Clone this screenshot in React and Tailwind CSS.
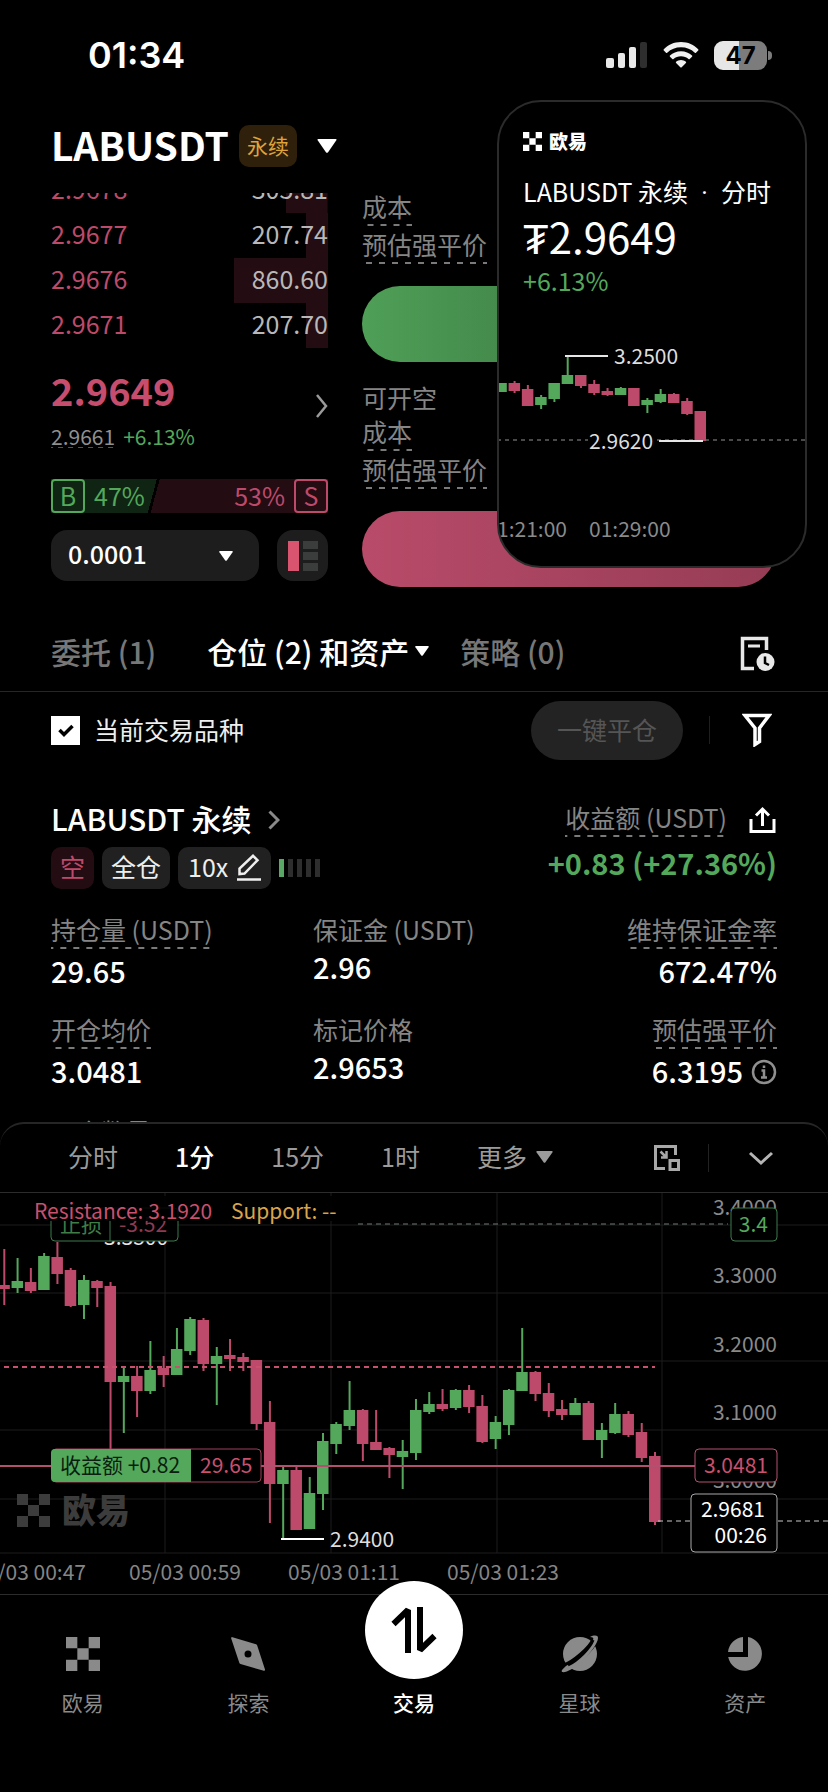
import React, { useState } from 'react';
import clsx from 'clsx';

const asks = [
  { price: '2.9677', size: '207.74', depth: '8%' },
  { price: '2.9676', size: '860.60', depth: '34%' },
  { price: '2.9671', size: '207.70', depth: '8%' },
];

// [up, high, bodyTop, bodyBottom, low]
const candles = [
  [0, 56, 92, 96, 112], [1, 65, 88, 95, 100], [0, 75, 89, 98, 100], [1, 60, 63, 97, 97], [0, 49, 64, 81, 91],
  [0, 75, 77, 113, 114], [1, 82, 87, 112, 126], [0, 87, 88, 95, 114], [0, 89, 93, 189, 257], [1, 173, 183, 189, 240],
  [0, 173, 183, 198, 224], [1, 148, 177, 198, 201], [0, 163, 175, 182, 194], [1, 135, 156, 182, 182], [1, 124, 126, 158, 162],
  [0, 125, 127, 171, 178], [1, 154, 163, 171, 212], [0, 146, 162, 166, 178], [0, 160, 164, 169, 178], [0, 167, 167, 231, 237],
  [0, 208, 229, 291, 330], [1, 274, 277, 291, 346], [0, 273, 277, 337, 337], [1, 284, 300, 336, 336], [1, 240, 248, 301, 317],
  [1, 229, 231, 251, 261], [1, 188, 217, 233, 237], [0, 216, 217, 251, 268], [0, 217, 249, 257, 257], [0, 254, 255, 262, 285],
  [1, 247, 258, 264, 296], [1, 206, 217, 260, 267], [1, 199, 211, 219, 221], [0, 196, 211, 216, 218], [1, 196, 197, 215, 217],
  [0, 192, 197, 214, 220], [0, 202, 213, 249, 250], [1, 223, 229, 246, 256], [1, 196, 197, 232, 242], [1, 135, 179, 198, 198],
  [0, 178, 179, 201, 208], [0, 190, 200, 218, 224], [0, 207, 216, 222, 227], [1, 205, 210, 222, 222], [0, 208, 210, 247, 247],
  [1, 230, 237, 247, 265], [1, 210, 221, 240, 241], [0, 218, 221, 242, 244], [0, 230, 239, 265, 269], [0, 259, 263, 329, 332],
];

const miniCandles = [
  [1, 43, 43, 52, 52], [0, 41, 43, 51, 53], [0, 45, 49, 66, 66], [1, 55, 57, 65, 69], [1, 43, 43, 59, 62], [1, 16, 35, 44, 44],
  [0, 35, 35, 46, 48], [0, 40, 44, 53, 55], [0, 48, 51, 55, 56], [1, 47, 48, 55, 55], [0, 48, 48, 66, 66], [1, 58, 60, 65, 73],
  [1, 49, 54, 62, 63], [0, 53, 54, 63, 63], [0, 58, 61, 74, 75], [0, 71, 71, 101, 101],
];

function Candles({ data }) {
  return data.map(([up, high, top, bottom, low], i) => {
    const x = 4.3 + i * 13.28;
    return (
      <g key={i} className={up ? 'fill-[#54a85b]' : 'fill-[#be4a6b]'}>
        <rect x={x - 1} y={high} width={2} height={low - high} />
        <rect x={x - 6} y={top} width={11.5} height={bottom - top} />
      </g>
    );
  });
}

function DashedLabel({ children, className }) {
  return (
    <span
      className={clsx(
        'inline-block w-fit h-[33px] text-[25px] leading-[27px] text-[#858585] bg-[linear-gradient(to_right,#7a7a7a_50%,transparent_50%)] bg-[length:13px_2px] bg-repeat-x bg-bottom',
        className
      )}
    >
      {children}
    </span>
  );
}

function OkxMark({ className }) {
  return (
    <svg viewBox="0 0 33 33" className={className} fill="currentColor">
      <path d="M0 0h11v11H0zM22 0h11v11H22zM11 11h11v11H11zM0 22h11v11H0zM22 22h11v11H22z" />
    </svg>
  );
}

function Triangle({ className }) {
  return (
    <svg viewBox="0 0 18 13" className={className} fill="currentColor">
      <path d="M1 0h16q1.500 0 .5 1.500L10 12.200q-1 1.200-2 0L.5 1.500Q-.5 0 1 0z" />
    </svg>
  );
}

function StatusBar() {
  return (
    <div className="h-[98px] pl-[88px] pr-14 pt-3 flex items-center justify-between">
      <span className="font-['Inter'] font-semibold text-[36px] leading-10">01:34</span>
      <div className="flex items-center gap-[15px]">
        <svg width="42" height="28" viewBox="0 0 42 28" fill="#e8e8e8">
          <rect x="0" y="17" width="8" height="10" rx="2" />
          <rect x="12" y="12" width="7" height="15" rx="2" />
          <rect x="23" y="6" width="7" height="21" rx="2" />
          <rect x="34" y="1" width="7" height="26" rx="2" fill="#2e2e2e" />
        </svg>
        <svg width="36" height="28" viewBox="0 0 36 28" fill="#f0f0f0">
          <path d="M18 1C11 1 5 3.800.800 8.200q-.6.700 0 1.300l2.200 2.200q.6.500 1.200 0C7.900 8.200 12.600 6.300 18 6.300s10.100 1.900 13.800 5.400q.6.500 1.200 0l2.200-2.200q.6-.6 0-1.300C31 3.800 25 1 18 1z" />
          <path d="M18 10.200c-4.300 0-8.200 1.600-11 4.300q-.7.600 0 1.300l2.300 2.200q.6.500 1.200 0c2-1.700 4.600-2.700 7.500-2.700s5.500 1 7.500 2.700q.6.500 1.200 0l2.300-2.200q.7-.7 0-1.300c-2.800-2.700-6.700-4.300-11-4.300z" />
          <path d="M18 19c-1.900 0-3.600.7-4.900 1.800q-.6.600 0 1.200l4.200 4.300q.7.600 1.400 0l4.200-4.300q.6-.6 0-1.200C21.600 19.700 19.900 19 18 19z" />
        </svg>
        <div className="flex items-center gap-px">
          <div className="w-[53px] h-[29px] rounded-[9px] bg-[linear-gradient(to_right,#e6e6e6_47%,#7c7c7c_47%)] text-black font-['Inter'] font-bold text-[24px] leading-[30px] text-center">
            47
          </div>
          <div className="w-1 h-[9px] rounded-r-full bg-[#7c7c7c]" />
        </div>
      </div>
    </div>
  );
}

function OrderBook() {
  return (
    <div className="w-[277px] shrink-0">
      <div className="h-5 overflow-hidden flex items-end">
        <div className="w-full h-[45px] pb-1 shrink-0 flex items-center justify-between text-[25px] bg-[linear-gradient(#240c13,#240c13)] bg-[length:15%_100%] bg-no-repeat bg-right">
          <span className="text-[#be4a6b]">2.9678</span>
          <span className="text-[#b8b8b8]">305.81</span>
        </div>
      </div>
      {asks.map((row) => (
        <div key={row.price} className="relative h-[45px] pb-1 flex items-center justify-between text-[25px]">
          <div className="absolute inset-y-0 right-0 bg-[#240c13]" style={{ width: row.depth }} />
          <span className="relative text-[#be4a6b]">{row.price}</span>
          <span className="relative text-[#b8b8b8]">{row.size}</span>
        </div>
      ))}

      <div className="mt-[22px] flex items-center justify-between">
        <div>
          <div className="text-[38px] leading-10 font-bold text-[#c64d6d]">2.9649</div>
          <div className="mt-[14px] flex gap-2 text-[21px] leading-6">
            <span className="text-[#909090] bg-[linear-gradient(to_right,#555_50%,transparent_50%)] bg-[length:10px_1px] bg-repeat-x bg-bottom">2.9661</span>
            <span className="text-[#54a85b]">+6.13%</span>
          </div>
        </div>
        <svg className="mb-[6px]" width="12" height="24" viewBox="0 0 12 24" fill="none" stroke="#9a9a9a" strokeWidth="2.500">
          <path d="M1 1l9 11-9 11" />
        </svg>
      </div>

      <div className="mt-[31px] h-[34px] flex items-center justify-between text-[25px] leading-[28px] bg-[linear-gradient(105deg,#0f2413_0,#0f2413_37%,#000_37%,#000_38%,#240c13_38%)]">
        <div className="flex items-center gap-[9px] text-[#54a85b]">
          <span className="size-[34px] border-2 border-[#54a85b] rounded-sm text-center">B</span>
          <span className="leading-[34px] pb-[3px]">47%</span>
        </div>
        <div className="flex items-center gap-[9px] text-[#be4a6b]">
          <span className="leading-[34px] pb-[3px]">53%</span>
          <span className="size-[34px] border-2 border-[#be4a6b] rounded-sm text-center">S</span>
        </div>
      </div>

      <div className="mt-[17px] flex gap-[18px]">
        <div className="relative flex-1 text-white">
          <select aria-label="精度" className="appearance-none w-full h-[51px] pl-[17px] pb-[3px] rounded-2xl bg-[#1d1d1d] text-[25px] font-medium">
            <option>0.0001</option>
          </select>
          <Triangle className="absolute right-[26px] top-[21px] w-[14px] h-[10px] pointer-events-none" />
        </div>
        <button aria-label="盘口样式" className="size-[51px] rounded-2xl bg-[#1d1d1d] flex items-center justify-center">
          <svg width="32" height="32" viewBox="0 0 32 32">
            <path fill="#d9546f" d="M1 1h11v30H1z" />
            <path fill="#3a3d3c" d="M16 1h15v8H16zM16 12h15v8H16zM16 23h15v8H16z" />
          </svg>
        </button>
      </div>
    </div>
  );
}

function OrderForm() {
  return (
    <div className="flex-1 flex flex-col items-start">
      <DashedLabel>成本</DashedLabel>
      <DashedLabel className="mt-[5px]">预估强平价</DashedLabel>
      <button aria-label="开多" className="mt-[22px] h-[76px] w-full rounded-full bg-linear-to-r from-[#4f9f57] to-[#2f6437]" />
      <span className="mt-5 text-[25px] leading-[30px] text-[#858585]">可开空</span>
      <DashedLabel className="mt-[6px]">成本</DashedLabel>
      <DashedLabel className="mt-[5px]">预估强平价</DashedLabel>
      <button aria-label="开空" className="mt-[22px] h-[76px] w-full rounded-full bg-linear-to-r from-[#b84b69] to-[#963c55]" />
    </div>
  );
}

function FloatingTicker() {
  return (
    <div className="absolute top-[100px] right-[21px] w-[310px] h-[468px] rounded-[44px] border-2 border-[#2b2b2b] bg-black overflow-hidden">
      <div className="px-6 pt-[27px]">
        <div className="flex items-center gap-[7px] h-6">
          <OkxMark className="size-[19px]" />
          <span className="text-[19px] leading-6 font-black">欧易</span>
        </div>
        <div className="mt-5 text-[25px] leading-[36px] whitespace-nowrap">
          LABUSDT 永续<span className="mx-[7px] font-['Roboto']"> · </span>分时
        </div>
        <div className="text-[42px] leading-[48px]">₮2.9649</div>
        <div className="mt-[2px] text-[25px] leading-[36px] text-[#54a85b]">+6.13%</div>
      </div>
      <svg viewBox="0 0 310 210" className="absolute left-[-2px] top-[238px] w-[310px]">
        <path d="M0 100h310" stroke="#4a4a4a" strokeWidth="2" strokeDasharray="4 4" />
        <Candles data={miniCandles} />
        <path d="M68 16h43M162 101h44" stroke="#e6e6e6" strokeWidth="2" />
        <text x="117" y="24" className="text-[21px] fill-[#dedede]">3.2500</text>
        <rect x="91" y="92" width="66" height="18" />
        <text x="92" y="109" className="text-[21px] fill-[#dedede]">2.9620</text>
        <text x="70" y="197" textAnchor="end" className="text-[21px] fill-[#8a8a8a]">01:21:00</text>
        <text x="92" y="197" className="text-[21px] fill-[#8a8a8a]">01:29:00</text>
      </svg>
    </div>
  );
}

function Metric({ label, value, dashed, right, info }) {
  return (
    <div className={clsx('flex flex-col gap-[2px]', right && 'items-end')}>
      {dashed ? <DashedLabel>{label}</DashedLabel> : <span className="h-[29px] text-[25px] leading-[27px] text-[#858585]">{label}</span>}
      <span className="h-[38px] flex items-center gap-2 text-[29px] leading-9 font-medium">
        {value}
        {info && (
          <svg className="mt-1" width="26" height="26" viewBox="0 0 26 26" fill="none" stroke="#8f8f8f" strokeWidth="2.500">
            <circle cx="13" cy="13" r="11" />
            <path d="M10.500 11.500H13V18M10 18.500h6M13 6.500v2.500" />
          </svg>
        )}
      </span>
    </div>
  );
}

function Position() {
  return (
    <section className="mt-8 px-[51px]">
      <div className="flex justify-between">
        <div>
          <a href="#position" className="flex items-center gap-4 h-9 text-[30px] font-medium">
            LABUSDT 永续
            <svg className="mt-1" width="12" height="20" viewBox="0 0 12 20" fill="none" stroke="#8a8a8a" strokeWidth="3">
              <path d="M1.500 1.500L10 10l-8.500 8.500" />
            </svg>
          </a>
          <div className="mt-[11px] h-[42px] flex items-center gap-2 text-[25px] leading-[38px]">
            <span className="h-full px-[9px] rounded-[10px] bg-[#240c13] text-[#be4a6b]">空</span>
            <span className="h-full px-[9px] rounded-[10px] bg-[#212121] text-[#eee]">全仓</span>
            <button className="h-full px-[10px] flex gap-[9px] rounded-[10px] bg-[#212121] text-[#eee]">
              10x
              <svg className="mt-[7px]" width="24" height="27" viewBox="0 0 24 27" fill="none" stroke="#eee" strokeWidth="2.500">
                <path d="M2.500 20v-5.500L16 1.800l4.500 4.400L7.500 19.500zM0 25.500h24" />
              </svg>
            </button>
            <div className="flex gap-1">
              <i className="w-[5px] h-[18px] bg-[#5aa866]" />
              <i className="w-[5px] h-[18px] bg-[#2e2e2e]" />
              <i className="w-[5px] h-[18px] bg-[#2e2e2e]" />
              <i className="w-[5px] h-[18px] bg-[#2e2e2e]" />
              <i className="w-[5px] h-[18px] bg-[#2e2e2e]" />
            </div>
          </div>
        </div>
        <div className="flex flex-col items-end">
          <div className="mt-[2px] h-9 flex items-center gap-[22px]">
            <DashedLabel>收益额 (USDT)</DashedLabel>
            <button aria-label="分享">
              <svg width="28" height="28" viewBox="0 0 28 28" fill="none" stroke="#fff" strokeWidth="3">
                <path d="M2 13v12.500h23V13M13.500 20V3M7 9.500L13.500 3l6.500 6.500" />
              </svg>
            </button>
          </div>
          <div className="mt-[6px] text-[29px] leading-9 font-bold text-[#54a85b]">+0.83 (+27.36%)</div>
        </div>
      </div>

      <div className="mt-[27px] grid grid-cols-[262px_1fr_auto] gap-y-[27px]">
        <Metric label="持仓量 (USDT)" value="29.65" dashed />
        <Metric label="保证金 (USDT)" value="2.96" />
        <Metric label="维持保证金率" value="672.47%" dashed right />
        <Metric label="开仓均价" value="3.0481" dashed />
        <Metric label="标记价格" value="2.9653" />
        <Metric label="预估强平价" value="6.3195" dashed right info />
      </div>
      <div className="mt-[25px] h-2 overflow-hidden text-[25px] leading-[34px] text-[#858585]">开仓数量</div>
    </section>
  );
}

function PriceChart() {
  return (
    <svg viewBox="0 0 828 401" className="block w-full text-[21px]">
      <path d="M0 32h828M0 100h828M0 168h828M0 237h828M0 306h828M0 360h828M165 0v360M331 0v360M497 0v360M662 0v360" stroke="#1c1c1c" strokeWidth="1" />

      <OkxLogoWatermark />

      <g textAnchor="end" className="fill-[#8a8a8a]">
        <text x="777" y="22">3.4000</text>
        <text x="777" y="90">3.3000</text>
        <text x="777" y="159">3.2000</text>
        <text x="777" y="227">3.1000</text>
        <text x="777" y="295">3.0000</text>
      </g>
      <text x="104" y="52" className="fill-[#e6e6e6]">3.3500</text>

      <Candles data={candles} />
      <path d="M4 174h651" stroke="#c9506f" strokeWidth="2" strokeDasharray="5 4" />
      <path d="M0 273h695" stroke="#b4506f" strokeWidth="2" />
      <path d="M358 31h370" stroke="#6f7a70" strokeWidth="1" strokeDasharray="5 4" />
      <path d="M658 328h32M778 328h50" stroke="#c8c8c8" strokeWidth="1" strokeDasharray="5 4" />
      <path d="M281 346h43" stroke="#fff" strokeWidth="2" />
      <text x="330" y="354" className="fill-[#dedede]">2.9400</text>

      {/* stop loss order */}
      <rect x="51" y="15" width="127" height="33" rx="4" fill="#000" stroke="#3c7a4c" />
      <path d="M110 15v33" stroke="#3c7a4c" />
      <text x="60" y="39" className="fill-[#3f7d46]">止损</text>
      <text x="119" y="39" className="fill-[#8f3a52]">-3.52</text>
      <rect x="27" y="3" width="318" height="25" fill="#000" fillOpacity="0.9" />
      <text x="34" y="26" className="fill-[#c9506f]">Resistance: 3.1920</text>
      <text x="231" y="26" className="fill-[#d9a44a]">Support: --</text>
      <rect x="731" y="15" width="46" height="33" rx="4" fill="#000" stroke="#3c7a4c" />
      <text x="768" y="39" textAnchor="end" className="fill-[#54a85b]">3.4</text>

      {/* open position */}
      <rect x="52" y="256" width="209" height="33" rx="4" fill="#000" stroke="#9c3f59" />
      <path d="M55 256h136v33H55q-4 0-4-4v-25q0-4 4-4z" fill="#54a85b" />
      <text x="60" y="280" className="fill-[#0b1f0e]">收益额 +0.82</text>
      <text x="200" y="280" className="fill-[#c9506f]">29.65</text>
      <rect x="695" y="256" width="82" height="33" rx="4" fill="#000" stroke="#b4506f" />
      <text x="768" y="280" textAnchor="end" className="fill-[#c9506f]">3.0481</text>

      {/* last price with countdown */}
      <rect x="691" y="301" width="86" height="58" rx="4" fill="#000" stroke="#a8a8a8" />
      <text x="765" y="324" textAnchor="end" className="fill-white">2.9681</text>
      <text x="767" y="350" textAnchor="end" className="fill-white">00:26</text>

      <g className="fill-[#858585]">
        <text x="86" y="387" textAnchor="end">05/03 00:47</text>
        <text x="129" y="387">05/03 00:59</text>
        <text x="288" y="387">05/03 01:11</text>
        <text x="447" y="387">05/03 01:23</text>
      </g>
    </svg>
  );
}

function OkxLogoWatermark() {
  return (
    <g className="fill-[#3c3c3c]">
      <path d="M17 301h11v11H17zM39 301h11v11H39zM28 312h11v11H28zM17 323h11v11H17zM39 323h11v11H39z" />
      <text x="62" y="330" className="text-[34px] font-black">欧易</text>
    </g>
  );
}

const intervals = ['分时', '1分', '15分', '1时'];

function ChartSheet() {
  const [active, setActive] = useState('1分');
  return (
    <section className="relative bg-black">
      <div className="h-[70px] pl-[68px] pr-[54px] flex items-center justify-between rounded-t-3xl border-t-2 border-[#262626] text-[25px] text-[#9b9b9b]">
        <div className="flex items-center gap-[57px] pb-[3px]">
          {intervals.map((name) => (
            <button key={name} onClick={() => setActive(name)} className={active === name ? 'text-white font-medium' : ''}>
              {name}
            </button>
          ))}
          <button className="flex items-center gap-[9px]">
            更多
            <Triangle className="w-[17px] h-3" />
          </button>
        </div>
        <div className="flex items-center gap-[27px]">
          <button aria-label="画中画">
            <svg width="28" height="28" viewBox="0 0 28 28" fill="none" stroke="#a8a8a8" strokeWidth="3">
              <path d="M12 24.500H2.500v-22h20V11M17 16.500h8.500v9H17z" />
              <path d="M7.500 7.500l5.500 5.500M13.500 7v6.500H8" strokeWidth="2.500" />
            </svg>
          </button>
          <div className="w-px h-7 bg-[#222]" />
          <button aria-label="收起" className="pl-3">
            <svg width="26" height="15" viewBox="0 0 26 15" fill="none" stroke="#b5b5b5" strokeWidth="3">
              <path d="M2 2l11 10L24 2" />
            </svg>
          </button>
        </div>
      </div>
      <div className="border-t border-[#2c2c2c]">
        <PriceChart />
      </div>
    </section>
  );
}

function NavItem({ label, children }) {
  return (
    <a href="#nav" className="flex-1 pt-[42px] flex flex-col items-center gap-4 text-[#8a8a8a]">
      {children}
      <span className="text-[21px] leading-[30px]">{label}</span>
    </a>
  );
}

function BottomNav() {
  return (
    <nav className="relative h-[198px] flex items-start border-t border-[#2c2c2c]">
      <NavItem label="欧易">
        <OkxMark className="size-[34px]" />
      </NavItem>
      <NavItem label="探索">
        <svg width="34" height="34" viewBox="0 0 34 34" fill="currentColor" fillRule="evenodd">
          <path d="M1.500.200L25 7.200q1 .3 1.200 1.200L34 32.500q.3 1.500-1.200 1.200L9.500 27q-1-.3-1.200-1.200L.2 1.500Q0-.2 1.500.200zM17 13.500a3.500 3.500 0 100 7 3.500 3.500 0 000-7z" />
        </svg>
      </NavItem>
      <a href="#trade" className="flex-1 -mt-[14px] flex flex-col items-center gap-2 text-white">
        <span className="size-[98px] rounded-full bg-white flex items-center justify-center">
          <svg width="46" height="48" viewBox="0 0 46 48" fill="none" stroke="#000" strokeWidth="6" strokeLinejoin="bevel">
            <path d="M2.500 18L17 4v43M43.500 30L29 44V1" />
          </svg>
        </span>
        <span className="text-[21px] leading-[30px] font-medium">交易</span>
      </a>
      <NavItem label="星球">
        <svg width="38" height="34" viewBox="0 0 38 34" className="overflow-visible">
          <circle cx="19" cy="17" r="17" fill="currentColor" />
          <path d="M3 30C12 27 30 13 35 1" fill="none" stroke="#000" strokeWidth="7" />
          <path d="M5 29c-3 3-5 4-4 6 4 1 11-3 19-10C29 17 37 6 37 1c0-3-4-3-8-1 3 0 4 1 3 3-3 7-16 20-27 26z" fill="currentColor" />
          <path d="M7 28C17 23 29 11 32 3" fill="none" stroke="#000" strokeWidth="3" />
        </svg>
      </NavItem>
      <NavItem label="资产">
        <svg width="34" height="34" viewBox="0 0 34 34" fill="currentColor">
          <path d="M15 0v15H0A17 17 0 0115 0zM20 0a17 17 0 11-19.800 20H20z" />
        </svg>
      </NavItem>
    </nav>
  );
}

export default function App() {
  const [onlyCurrent, setOnlyCurrent] = useState(true);

  return (
    <div className="relative min-h-screen bg-black text-white overflow-hidden font-['Noto_Sans_CJK_SC',sans-serif]">
      <StatusBar />

      <header className="h-[95px] px-[51px] flex items-center">
        <h1 className="pb-1 text-[39px] font-bold leading-[48px]">LABUSDT</h1>
        <span className="ml-[10px] h-[42px] px-2 rounded-[10px] bg-[#2e200b] text-[21px] leading-[40px] text-[#e0a33a]">永续</span>
        <button aria-label="切换交易对" className="ml-5">
          <Triangle className="w-5 h-[14px]" />
        </button>
      </header>

      <section className="pl-[51px] pr-[52px] flex gap-[34px]">
        <OrderBook />
        <OrderForm />
      </section>

      <div className="mt-[26px] h-[79px] pl-[51px] pr-[53px] flex items-center justify-between border-b border-[#262626] text-[30px] font-medium text-[#777]">
        <div className="flex items-center gap-[31px] pb-[2px]">
          <button className="mr-5">委托 (1)</button>
          <button className="flex items-center gap-[6px] text-white">
            仓位 (2) 和资产
            <Triangle className="w-[14px] h-[10px]" />
          </button>
          <button>策略 (0)</button>
        </div>
        <button aria-label="历史记录">
          <svg className="mt-1" width="36" height="36" viewBox="0 0 36 36" fill="none" stroke="#e8e8e8">
            <path d="M15 32.500H3.500v-30h24V14" strokeWidth="3.500" />
            <path d="M9 10h12" strokeWidth="3" />
            <circle cx="26.500" cy="26" r="9" fill="#e8e8e8" stroke="none" />
            <path d="M26 20.500V27l4 2" stroke="#000" strokeWidth="2.500" />
          </svg>
        </button>
      </div>

      <div className="h-[76px] pl-[51px] pr-14 flex items-center justify-between">
        <label className="flex items-center gap-[14px] text-[25px] text-[#eee]">
          <span className="relative size-[29px]">
            <input type="checkbox" checked={onlyCurrent} onChange={(e) => setOnlyCurrent(e.target.checked)} className="peer appearance-none block size-[29px] bg-[#555] checked:bg-white" />
            <svg viewBox="0 0 29 29" className="absolute inset-0 pointer-events-none" fill="none" stroke="#000" strokeWidth="3.500">
              <path d="M8.500 14l4.500 4.500L21.500 10" />
            </svg>
          </span>
          当前交易品种
        </label>
        <div className="flex items-center">
          <button disabled className="h-[59px] px-[26px] rounded-full bg-[#232323] text-[25px] text-[#555]">一键平仓</button>
          <div className="ml-[26px] w-px h-7 bg-[#1f1f1f]" />
          <button aria-label="筛选" className="ml-8">
            <svg width="30" height="34" viewBox="0 0 30 34" fill="none" stroke="#fff" strokeWidth="3.500">
              <path d="M3 2.500h24L17.500 15v13.500l-4.500 3V15z" />
            </svg>
          </button>
        </div>
      </div>

      <Position />
      <ChartSheet />
      <BottomNav />
      <FloatingTicker />
    </div>
  );
}
